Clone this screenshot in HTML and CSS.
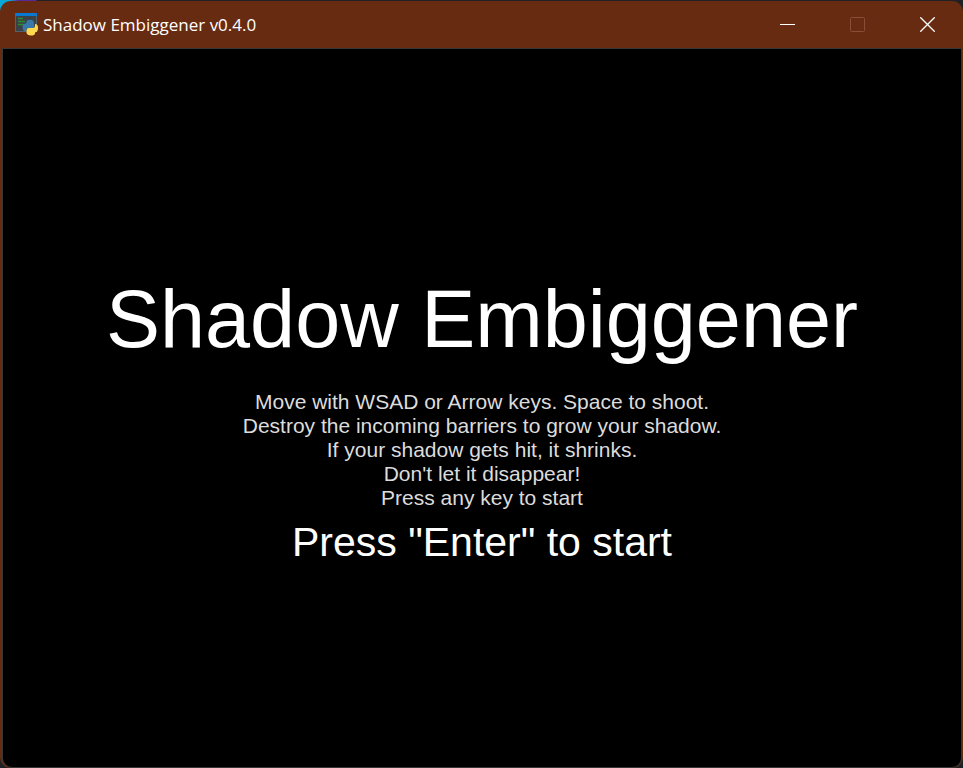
FILE: index.html
```html
<!DOCTYPE html>
<html lang="en">
<head>
<meta charset="utf-8">
<title>Shadow Embiggener v0.4.0</title>
<link rel="stylesheet" href="styles.css">
</head>
<body>
<div class="window">
  <header class="titlebar">
    <svg class="app-icon" viewBox="0 0 23 23" aria-hidden="true">
      <rect x="0.5" y="0.5" width="21" height="18" fill="#3b4145" stroke="#526271"/>
      <rect width="22" height="3" fill="#0878d0"/>
      <path d="M3 5.500h5M3 8.500h7M3 11.500h6" stroke="#2d8a35" stroke-width="1.400"/>
      <path d="M12 7.500q3.500-1.500 6 0 1 1 1 4v2q0 1.500-2 1.500h-4q-2 0-2 3.500-3.500 0-3.500-4.500 0-3.500 3.500-3.500z" fill="#3979aa"/>
      <path d="M20 11q3 0 3 4 0 4-3 4.500v1q-.5 2-4 2t-4.500-2.500v-3q0-2 2.500-2h4q2 0 2-2z" fill="#ffda50"/>
    </svg>
    <span class="caption">Shadow Embiggener v0.4.0</span>
    <button class="control" type="button" aria-label="Minimize">
      <svg viewBox="0 0 15 15"><path d="M0 7.500h15" stroke="#fff"/></svg>
    </button>
    <button class="control" type="button" aria-label="Maximize" disabled>
      <svg viewBox="0 0 15 15"><rect x="0.500" y="0.500" width="14" height="14" rx="1" fill="none" stroke="#874f38"/></svg>
    </button>
    <button class="control" type="button" aria-label="Close">
      <svg viewBox="0 0 15 15"><path d="M.3.3l14.400 14.400M14.700.3L.3 14.700" stroke="#fff" stroke-width="1.300"/></svg>
    </button>
  </header>
  <main class="screen">
    <h1>Shadow Embiggener</h1>
    <p class="help">Move with WSAD or Arrow keys. Space to shoot.<br>Destroy the incoming barriers to grow your shadow.<br>If your shadow gets hit, it shrinks.<br>Don't let it disappear!<br>Press any key to start</p>
    <p class="start">Press "Enter" to start</p>
  </main>
</div>
</body>
</html>
```
FILE: styles.css
```css
* {
  box-sizing: border-box;
}

body {
  margin: 0;
  height: 100vh;
  padding-top: 1px;
  background: #202125 linear-gradient(90deg, #08a8d8 0 10px, #5b2a9a 18px 36px, #202125 37px) top / 100% 12px no-repeat;
}

.window {
  display: flex;
  flex-direction: column;
  height: 100%;
  padding: 0 1px 0 2px;
  border-radius: 11px;
  background: #672b11;
}

.titlebar {
  display: flex;
  align-items: center;
  height: 47px;
  padding-left: 13px;
}

.app-icon {
  width: 23px;
  height: 23px;
}

.caption {
  flex: 1;
  padding-left: 5px;
  font: 17px/24px "Open Sans", sans-serif;
  color: #fff;
}

.control {
  display: flex;
  align-items: center;
  justify-content: center;
  width: 70px;
  height: 100%;
  padding: 0;
  border: 0;
  background: none;
}

.control svg {
  width: 15px;
  height: 15px;
}

.screen {
  flex: 1;
  display: flex;
  flex-direction: column;
  align-items: center;
  justify-content: center;
  padding-top: 23px;
  border: 1px solid #383838;
  border-radius: 0 0 10px 10px;
  background: #000;
  color: #fff;
  font-family: "Liberation Sans", Arial, sans-serif;
  text-align: center;
}

h1 {
  margin: 0 0 26px;
  font-size: 81px;
  font-weight: 400;
  line-height: 90px;
}

.help {
  margin: 0 0 9px;
  font-size: 21px;
  line-height: 24px;
  color: #dcdcdc;
}

.start {
  margin: 0;
  font-size: 41px;
  line-height: 46px;
}
```
